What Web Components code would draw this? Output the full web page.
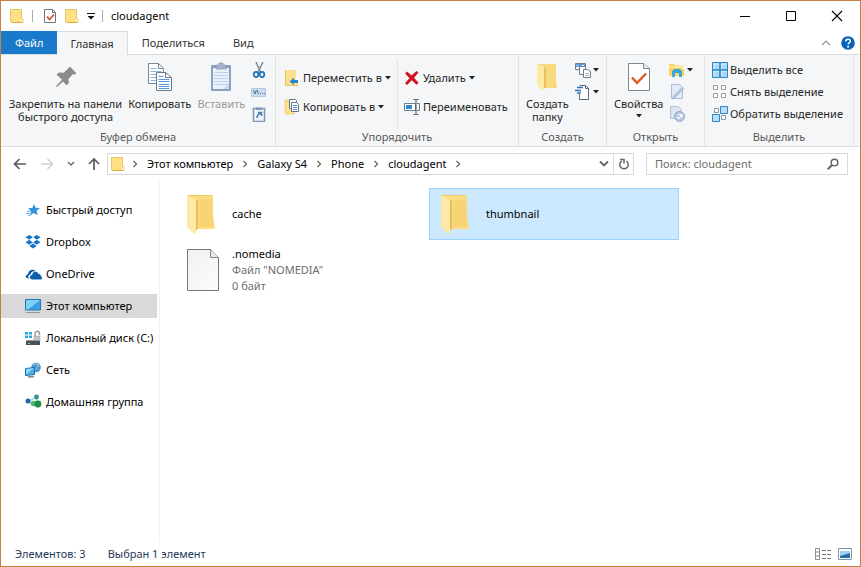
<!DOCTYPE html>
<html lang="ru">
<head>
<meta charset="utf-8">
<title>cloudagent</title>
<style>
html, body { height: 100%; margin: 0; }
body { font: 11px/16px "Noto Sans", "Open Sans", sans-serif; color: #111; background: #fff; }
</style>
</head>
<body>
<explorer-window>
  <title-bar slot="title" heading="cloudagent"></title-bar>
  <tab-strip slot="tabs"></tab-strip>

  <ribbon-bar slot="ribbon">
    <ribbon-group label="Буфер обмена" style="--w:275px;--p:8px">
      <ribbon-big icon="pin">Закрепить на панели<br>быстрого доступа</ribbon-big>
      <ribbon-big icon="copy">Копировать</ribbon-big>
      <ribbon-big icon="paste" off>Вставить</ribbon-big>
      <ribbon-stack>
        <ribbon-small icon="cut" name="Вырезать"></ribbon-small>
        <ribbon-small icon="path" name="Скопировать путь"></ribbon-small>
        <ribbon-small icon="shortcut" name="Вставить ярлык"></ribbon-small>
      </ribbon-stack>
    </ribbon-group>
    <ribbon-group label="Упорядочить" style="--w:243px;--p:8px">
      <ribbon-stack wide>
        <ribbon-small icon="moveto" menu>Переместить в</ribbon-small>
        <ribbon-small icon="copyto" menu>Копировать в</ribbon-small>
      </ribbon-stack>
      <ribbon-stack wide ruled>
        <ribbon-small icon="delete" menu>Удалить</ribbon-small>
        <ribbon-small icon="rename">Переименовать</ribbon-small>
      </ribbon-stack>
    </ribbon-group>
    <ribbon-group label="Создать" style="--w:88px">
      <ribbon-big icon="folderbig">Создать<br>папку</ribbon-big>
      <ribbon-stack>
        <ribbon-small icon="newitem" name="Создать элемент" menu></ribbon-small>
        <ribbon-small icon="easy" name="Простой доступ" menu></ribbon-small>
      </ribbon-stack>
    </ribbon-group>
    <ribbon-group label="Открыть" style="--w:98px">
      <ribbon-big icon="props" menu>Свойства</ribbon-big>
      <ribbon-stack>
        <ribbon-small icon="open" name="Открыть" menu></ribbon-small>
        <ribbon-small icon="edit" name="Изменить"></ribbon-small>
        <ribbon-small icon="history" name="Журнал"></ribbon-small>
      </ribbon-stack>
    </ribbon-group>
    <ribbon-group label="Выделить" style="--w:149px">
      <ribbon-stack>
        <ribbon-small icon="selall">Выделить все</ribbon-small>
        <ribbon-small icon="selnone">Снять выделение</ribbon-small>
        <ribbon-small icon="selinv">Обратить выделение</ribbon-small>
      </ribbon-stack>
    </ribbon-group>
  </ribbon-bar>

  <address-bar slot="address" path="Этот компьютер/Galaxy S4/Phone/cloudagent"></address-bar>

  <nav-pane slot="nav">
    <nav-item icon="star">Быстрый доступ</nav-item>
    <nav-item icon="dropbox">Dropbox</nav-item>
    <nav-item icon="cloud">OneDrive</nav-item>
    <nav-item icon="pc" current>Этот компьютер</nav-item>
    <nav-item icon="disk">Локальный диск (C:)</nav-item>
    <nav-item icon="net">Сеть</nav-item>
    <nav-item icon="home">Домашняя группа</nav-item>
  </nav-pane>

  <file-grid slot="files">
    <file-tile icon="folder">cache</file-tile>
    <file-tile icon="folder" selected>thumbnail</file-tile>
    <file-tile icon="file">.nomedia<span slot="meta">Файл "NOMEDIA"</span><span slot="meta">0 байт</span></file-tile>
  </file-grid>

  <status-bar slot="status">
    <span>Элементов: 3</span>
    <span>Выбран 1 элемент</span>
  </status-bar>
</explorer-window>

<script>
const MINI_FOLDER = '<path d="M1 1h10l1 1v11l2 1v1H3l-2-1z" fill="#ffe084"/><path d="M11 1.500h1.500v9.500H14v3.500H3l-1.500-1V1.500z" fill="none" stroke="#e8c565"/><path d="M3 14.500h10" stroke="#d9ab3c"/>';
const ICONS = {
  minifolder: [16, 16, MINI_FOLDER],
  minicheck: [14, 16, '<path d="M1.500 1.500h8l3 3v10h-11z" fill="#fff" stroke="#6f7780"/><path d="M9.500 1.500v3h3" fill="none" stroke="#6f7780"/><path d="M4 8.500l2.500 3 4.500-5" fill="none" stroke="#d4502a" stroke-width="1.800"/>'],
  qat: [8, 8, '<path d="M0 1.500h8" stroke="#111"/><path d="M0.500 4h7L4 7.500z" fill="#111"/>'],
  min: [12, 12, '<path d="M1 6.500h10" stroke="#000"/>'],
  max: [12, 12, '<path d="M1.500 1.500h9v9h-9z" fill="none" stroke="#000"/>'],
  close: [12, 12, '<path d="M1 1l10 10M11 1L1 11" stroke="#000" stroke-width="1.100"/>'],
  collapse: [10, 6, '<path d="M1 5l4-4 4 4" fill="none" stroke="#999" stroke-width="1.200"/>'],
  help: [14, 14, '<circle cx="7" cy="7" r="6.800" fill="#0a62b8"/><path d="M4.800 5.400c0-3 4.500-2.800 4.500-.3 0 1.700-2.200 1.600-2.200 3.500" fill="none" stroke="#fff" stroke-width="1.500"/><circle cx="7.100" cy="10.800" r="1" fill="#fff"/>'],
  arrow: [6, 4, '<path d="M0 0h6L3 3.500z" fill="#222"/>'],
  pin: [32, 32, '<path d="M20.500 6l6 6.500-2 1.200-1.500-.6-4.500 5 .3 4.200-2.400 2L13 20.500 7.500 25.500 6 26l.8-1.800L12 18.800 6.500 13.500l2.500-2 4.600.2 4.700-4.200-.2-.8z" fill="#8b8b8b"/>'],
  copy: [32, 32, '<path d="M4.500 2.500h10l5 5v15h-15z" fill="#fff" stroke="#7b8794"/><path d="M14.500 2.500v5h5" fill="none" stroke="#7b8794"/><path d="M6.500 7.500h6M6.500 10.500h11M6.500 13.500h11M6.500 16.500h11M6.500 19.500h11" stroke="#8ab6e6"/><path d="M12.500 11.500h9l6 5v13h-15z" fill="#fff" stroke="#6b7885"/><path d="M21.500 11.500v5h6" fill="none" stroke="#6b7885"/><path d="M14.500 15.500h5M14.500 18.500h11M14.500 20.500h11M14.500 23.500h11M14.500 25.500h11M14.500 27.500h11" stroke="#5c9ae0"/>'],
  paste: [32, 32, '<rect x="6" y="4" width="20" height="26" rx="1" fill="#8b9fbe"/><path d="M8 7h16v21H8z" fill="#eaf1fb"/><path d="M9 11.500h14M9 14.500h14M9 17.500h14M9 20.500h14M9 23.500h14" stroke="#bcd2ee"/><path d="M18 28l6-6v6z" fill="#c8d6e8"/><path d="M11 4h3V2h4v2h3v4H11z" fill="#a7b5cc" stroke="#7d8fae" stroke-width=".600"/>'],
  cut: [16, 16, '<path d="M5 0l4.500 10M12 0L7 10" stroke="#7c8b99" stroke-width="1.500"/><ellipse cx="5" cy="12.500" rx="2.300" ry="2.600" fill="none" stroke="#1f73b8" stroke-width="1.700"/><ellipse cx="11" cy="12.500" rx="2.300" ry="2.600" fill="none" stroke="#1f73b8" stroke-width="1.700"/>'],
  path: [16, 16, '<path d="M.5 4.500h14v8H.5z" fill="#c9dcf1" stroke="#b4c9e2"/><path d="M2.500 6l1.500 4 1.500-4M6 6l1.500 4M9 9.500h1M11 9.500h1M13 9.500h1" fill="none" stroke="#566f92"/>'],
  shortcut: [16, 16, '<path d="M2.500 2.500h11v13h-11z" fill="#f1f5fb" stroke="#8197b8" stroke-width="1.600"/><path d="M5 1.500h6V4H5z" fill="#8197b8"/><path d="M6 12c0-3 1-4 4-5M7 6.500h3.500V10" fill="none" stroke="#5079b5" stroke-width="1.600"/>'],
  moveto: [16, 16, '<path d="M1 0h11v11l2 1v4H2l-1-1z" fill="#ffe08a"/><path d="M1.500 0v15.500H14" fill="none" stroke="#e8c468"/><path d="M14 10h-4V7.500L5.500 11.500 10 15v-2h4z" fill="#2f83c8"/>'],
  copyto: [16, 16, '<path d="M1 1h9v14H2l-1-1z" fill="#ffe08a" stroke="#e8c468" stroke-width=".700"/><path d="M5.500.5h6l1 1v8h-7z" fill="#fff" stroke="#63748a"/><path d="M7.500 3.500h5l2 2v7h-7z" fill="#fff" stroke="#63748a"/><path d="M9 6.500h4M9 8.500h4M9 10.500h4" stroke="#4b8ad2"/>'],
  delete: [16, 16, '<path d="M3 1.500l4.500 4L12.500 1l2 1.500L10 7.800l4.500 5-2 2L7.800 10.200 3 15l-2-1.800 4.500-5L1.200 3.500z" fill="#d5101d"/>'],
  rename: [16, 16, '<path d="M.5 4.500h11v7H.5z" fill="#fff" stroke="#6c8093"/><path d="M2 6h6v4H2z" fill="#3586cf"/><path d="M13 4.500h2.500v7H13" fill="none" stroke="#6c8093"/><path d="M9.500.5h2l.500.500.500-.500h2M12 1v14M9.500 15.500h2l.500-.500.500.500h2" fill="none" stroke="#44515f"/>'],
  folderbig: [32, 32, '<path d="M6 3h19v17l1 7H13z" fill="#f8d97e"/><path d="M6 3l8 3v18l-2 6-5-5-1-3z" fill="#ffeaa6"/><path d="M13 6l2 1v18l-2 3z" fill="#e8bf63"/>'],
  newitem: [16, 16, '<path d="M.5 1.500h10v6H.5z" fill="#fff" stroke="#6d7c8c"/><path d="M1 2h9v3H1z" fill="#5f9fd9"/><path d="M2 3.500h1M7 3.500h2" stroke="#fff"/><path d="M4.500 4.500h6v8h-6z" fill="#fff" stroke="#6d7c8c"/><path d="M8.500 7.500h4l3 2v6h-7z" fill="#fff" stroke="#6d7c8c"/><path d="M10 11.500h4M10 13.500h4" stroke="#aab6c2"/>'],
  easy: [16, 16, '<path d="M4.500 1.500h6l3 3v11h-9V10" fill="#fff" stroke="#5f6a75"/><path d="M10.500 1.500v3h3" fill="none" stroke="#5f6a75"/><path d="M2 3.500h6M0 6.500h6M2 9h4" stroke="#2c6fb8" stroke-width="1.400"/>'],
  props: [32, 32, '<path d="M5.500 2.500h15l6 5v22h-21z" fill="#fff" stroke="#7b8794"/><path d="M20.500 2.500v5h6" fill="#eee" stroke="#7b8794"/><path d="M9 16.500l5 5.500 9-9.500" fill="none" stroke="#dc5a24" stroke-width="2.500"/>'],
  open: [16, 16, '<path d="M0 2h5l1 1.500h7V7h2v7H0z" fill="#fbd35e"/><path d="M0 4h14v2H0z" fill="#ffe794"/><path d="M3 15V9.500L5 7h6l2 2.500V15h-3v-4H6v4z" fill="#3ba5df"/>'],
  edit: [16, 16, '<path d="M2.500.5h8l3 3v11h-11z" fill="#e3ebf6" stroke="#a9bcd8"/><path d="M13.500 3l1.500 1.500L6 13.500l-2.500 1 1-2.500z" fill="#b4c6e0" stroke="#92abcf" stroke-width=".600"/>'],
  history: [16, 16, '<path d="M1.500.5h8l3 3v9h-11z" fill="#dde5f1" stroke="#b3c1d6"/><circle cx="10.500" cy="10.500" r="5" fill="#b7c6dd" stroke="#8fa5c4"/><path d="M7.500 11l2.500 1.500 3-4M9 8.500h4v3" fill="none" stroke="#fff" stroke-width="1.200"/>'],
  selall: [16, 16, '<path d="M.5.5h15v15H.5z" fill="#a9d8f8" stroke="#2c87c9"/><path d="M8 1v14M1 8h14" stroke="#2c87c9" stroke-width="1.600"/><path d="M2 7V2H7M9.500 7V2H14M2 14V9.500H7M9.500 14V9.500H14" fill="none" stroke="#d4edff"/>'],
  selnone: [16, 16, '<path d="M1.500 1.500h4v4h-4zM9.500 1.500h4v4h-4zM1.500 9.500h4v4h-4zM9.500 9.500h4v4h-4z" fill="#fff" stroke="#9a9a9a"/>'],
  selinv: [16, 16, '<path d="M8.500.5h7v7h-7zM.5 8.500h7v7h-7z" fill="#b5defa" stroke="#2c87c9"/><path d="M2.500 2.500h4v4h-4zM9.500 9.500h4v4h-4z" fill="#fff" stroke="#8299ad"/>'],
  back: [14, 12, '<path d="M13 6H2M6.500 1L1.500 6l5 5" fill="none" stroke="#5c5c5c" stroke-width="1.700"/>'],
  fwd: [14, 12, '<path d="M1 6h11M7.500 1l5 5-5 5" fill="none" stroke="#cfcfcf" stroke-width="1.500"/>'],
  up: [12, 14, '<path d="M6 13V2M1 7l5-5 5 5" fill="none" stroke="#5c5c5c" stroke-width="1.700"/>'],
  down: [8, 6, '<path d="M1 1l3 3 3-3" fill="none" stroke="#6c6c6c" stroke-width="1.500"/>'],
  downbig: [10, 8, '<path d="M1 1.500l4 4 4-4" fill="none" stroke="#666" stroke-width="1.800"/>'],
  chev: [6, 8, '<path d="M1.500 1l3 3-3 3" fill="none" stroke="#666" stroke-width="1.300"/>'],
  refresh: [12, 14, '<path d="M8.500 4.200A4.200 4.200 0 1 1 3.800 4" fill="none" stroke="#666" stroke-width="1.500"/><path d="M2 2.500h4v4" fill="none" stroke="#666" stroke-width="1.500"/>'],
  search: [12, 12, '<circle cx="7.500" cy="4.500" r="3.300" fill="none" stroke="#666" stroke-width="1.500"/><path d="M5 7l-4.300 4.300" stroke="#666" stroke-width="2"/>'],
  star: [16, 16, '<path d="M9 2l1.600 3.800 4.400.2-3.400 2.800 1 4.400-3.900-2.200L5 13.500l1.200-4.200L3 6.400l4.500-.6z" fill="#2f93dc"/><path d="M2 9.500h3.500M1 11.500h4M3 13.500h2" stroke="#5fb0e8"/>'],
  dropbox: [16, 16, '<path d="M4.300 1L8 3.300 4.300 5.800.5 3.300zM11.700 1l3.800 2.300-3.800 2.500L8 3.300zM4.300 5.800L8 8.300l-3.700 2.400L.5 8.300zM11.700 5.800l3.800 2.500-3.800 2.400L8 8.300zM4.300 12L8 9.500l3.700 2.500L8 14.500z" fill="#1673c8"/><path d="M4.300 5.800L8 3.300l3.700 2.500L8 8.300z" fill="#fff"/>'],
  cloud: [18, 16, '<path d="M3 12.500C-.5 12 .2 8.200 3 8.200 3 4 8.500 2 11 5.600c-3-.9-5 .6-5.300 2.600-2.500.5-2.900 2.900-1.700 4.300z" fill="#0d5fae"/><path d="M7.500 13.500c-3.700-.3-3.200-4.500-.3-4.600.1-3.900 5.500-4.200 6.300-1 2-.1 2.500 1.500 2.300 2.300 1.900.5 1.600 3.200-.3 3.300z" fill="#0d5fae"/>'],
  pc: [18, 16, '<path d="M.5 1.500h15v10.500h-15z" fill="#3aa0e0" stroke="#2876b0"/><path d="M1 2h14L3 11.500H1z" fill="#7fd0f6"/><path d="M1 14.500h14" stroke="#8c9aa5"/>'],
  disk: [16, 16, '<path d="M0 2h3v2.500H0zM4 2h3v2.500H4zM0 5.500h3V8H0zM4 5.500h3V8H4z" fill="#2aa8d8"/><path d="M10 6V3.500a2.200 2.200 0 0 1 4.500 0V5" fill="none" stroke="#9a9a9a" stroke-width="1.400"/><path d="M9 6h6v5H9z" fill="#c4c4c4" stroke="#999" stroke-width=".500"/><path d="M1 11h14v4H1z" fill="#4a5057"/><path d="M2 10h12l1 1H1z" fill="#999"/><path d="M3 13.500h2" stroke="#6fe07a"/>'],
  net: [16, 16, '<circle cx="11" cy="5.500" r="4.800" fill="#4f95c9"/><path d="M8 3c2-2 5-1 6 1M9 8c2 0 4-2 4-6" fill="none" stroke="#a4d0ee"/><path d="M.5 6.500l9-1v7l-9 1z" fill="#49b0ec" stroke="#1d6ea8"/><path d="M1 7l8-1-7 6H1z" fill="#8dd6f9"/><path d="M3 15l6-.5" stroke="#6f8290" stroke-width="1.300"/>'],
  home: [17, 16, '<path d="M3 7.500l9-4.500v10z" fill="none" stroke="#9ccfc0" stroke-width="1.200"/><circle cx="3" cy="7" r="2.500" fill="#2367a8"/><circle cx="11.500" cy="3" r="2.400" fill="#2a8f9a"/><circle cx="8.500" cy="9.500" r="2.800" fill="#4dbb6c"/><circle cx="13" cy="10" r="3.400" fill="#268a4b"/>'],
  folder: [32, 44, '<path d="M1 3h25v20l2 14H9z" fill="#fbdc80"/><path d="M12 8l13-1 1 28H12z" fill="#f6d16c" opacity=".7"/><path d="M0 3l9 5v33l-2 1-5-5-2-2z" fill="#ffe9a6"/><path d="M1 3.500h24" stroke="#f2c868"/><path d="M9 8l2 1v27l-2 3z" fill="#e6bb5d"/>'],
  file: [32, 44, '<defs><linearGradient id="g" x1="0" y1="0" x2="1" y2="1"><stop offset="0" stop-color="#f1f1f1"/><stop offset="1" stop-color="#fcfcfc"/></linearGradient></defs><path d="M.5 1.500h23l8 8v33H.5z" fill="url(#g)" stroke="#777"/><path d="M23.500 1.500v8h8" fill="#e8e8e8" stroke="#888"/>'],
  details: [16, 12, '<path d="M.5 .5h4v11h-4zM.5 4h4M.5 8h4" fill="none" stroke="#8c8c8c"/><path d="M7 2.500h4M12 2.500h4M7 6.500h4M12 6.500h4M7 10.500h4M12 10.500h4" stroke="#777"/>'],
  tiles: [14, 12, '<path d="M.5.5h13v11H.5z" fill="#fff" stroke="#7d94b0"/><path d="M2 3h10v7H2z" fill="#2d6ca2"/><path d="M2 3h10v2L2 8z" fill="#9cd3f0"/>']
};

class UiIcon extends HTMLElement {
  static observedAttributes = ['name'];
  constructor() {
    super();
    this.attachShadow({ mode: 'open' });
  }
  attributeChangedCallback() {
    const [w, h, body] = ICONS[this.getAttribute('name')];
    this.shadowRoot.innerHTML = `<style>:host{display:inline-flex;flex:none}svg{display:block}</style>
      <svg aria-hidden="true" width="${w}" height="${h}" viewBox="0 0 ${w} ${h}">${body}</svg>`;
  }
}
customElements.define('ui-icon', UiIcon);

function define(name, css, html, setup) {
  const tpl = document.createElement('template');
  tpl.innerHTML = '<style>*{box-sizing:border-box}button{font:inherit;color:inherit;background:none;border:0;padding:0;margin:0}' + css + '</style>' + html;
  customElements.define(name, class extends HTMLElement {
    connectedCallback() {
      if (this.shadowRoot) return;
      const root = this.attachShadow({ mode: 'open' });
      root.append(tpl.content.cloneNode(true));
      if (setup) setup(this, root);
    }
  });
}
const attr = (el, n) => el.getAttribute(n) || '';

define('explorer-window', `
  :host{display:flex;flex-direction:column;box-sizing:border-box;min-height:100vh;border:1px solid #c9803f;background:#fff}
  main{flex:1;display:grid;grid-template-columns:156px 1fr;gap:2px}
  .nav{min-width:0}.files{border-left:1px solid #f2f2f2;min-width:0}`,
  `<slot name="title"></slot><slot name="tabs"></slot><slot name="ribbon"></slot><slot name="address"></slot>
  <main><div class="nav"><slot name="nav"></slot></div><div class="files"><slot name="files"></slot></div></main>
  <slot name="status"></slot>`);

define('title-bar', `
  :host{display:flex;align-items:center;height:30px;padding-left:8px}
  button{display:flex;align-items:center;justify-content:center}
  i{width:1px;height:12px;background:#aaa}
  .quick{display:flex;align-items:center;gap:7px}
  .props{padding-left:3px}
  h1{flex:1;margin:0 0 0 8px;font:inherit;color:#000}
  .ctl{width:46px;height:30px}`,
  `<div class="quick"><ui-icon name="minifolder"></ui-icon><i></i>
  <button class="props" aria-label="Свойства"><ui-icon name="minicheck"></ui-icon></button>
  <button aria-label="Новая папка"><ui-icon name="minifolder"></ui-icon></button>
  <button aria-label="Настройка панели"><ui-icon name="qat"></ui-icon></button><i></i></div>
  <h1></h1>
  <button class="ctl" aria-label="Свернуть"><ui-icon name="min"></ui-icon></button>
  <button class="ctl" aria-label="Развернуть"><ui-icon name="max"></ui-icon></button>
  <button class="ctl" aria-label="Закрыть"><ui-icon name="close"></ui-icon></button>`,
  (el, root) => { root.querySelector('h1').textContent = attr(el, 'heading'); });

define('tab-strip', `
  :host{display:flex;height:24px;border-bottom:1px solid #dadbdc;box-sizing:border-box}
  button{padding:0 14px;color:#333}
  .file{background:#1979ca;color:#fff}
  .on{background:#f5f6f7;border:1px solid #dadbdc;border-bottom:0;border-left:0;margin-bottom:-1px;padding:0 13px}
  span{flex:1}.side{display:flex;align-items:center;padding:0 5px}`,
  `<button class="file">Файл</button><button class="on">Главная</button><button>Поделиться</button><button>Вид</button><span></span>
  <button class="side" aria-label="Свернуть ленту"><ui-icon name="collapse"></ui-icon></button>
  <button class="side" aria-label="Справка"><ui-icon name="help"></ui-icon></button>`);

define('ribbon-bar', ':host{display:flex;min-height:91px;background:#f5f6f7;border-bottom:1px solid #dadbdc;color:#262626}', '<slot></slot>');

define('ribbon-group', `
  :host{display:flex;flex-direction:column;box-sizing:border-box;min-width:var(--w);flex:none;padding:4px 0 1px;border-right:1px solid #e2e3e4}
  .body{flex:1;display:flex;gap:6px;padding-left:var(--p,7px)}
  .label{text-align:center;color:#5a5a5a}`,
  '<div class="body"><slot></slot></div><div class="label"></div>',
  (el, root) => { root.querySelector('.label').textContent = attr(el, 'label'); });

define('ribbon-big', `
  :host{display:block}:host([off]){color:#9b9b9b}
  button{display:flex;flex-direction:column;align-items:center;line-height:13px;padding-top:2px}
  span{padding-top:4px}.m{margin-top:4px}`,
  '<button><ui-icon></ui-icon><span><slot></slot></span></button>',
  (el, root) => {
    root.querySelector('ui-icon').setAttribute('name', attr(el, 'icon'));
    if (el.hasAttribute('menu')) root.querySelector('button').insertAdjacentHTML('beforeend', '<ui-icon class="m" name="arrow"></ui-icon>');
  });

define('ribbon-stack', `
  :host{display:flex;flex-direction:column;gap:6px;padding-top:3px}
  :host([wide]){gap:13px;padding-top:11px}
  :host([ruled]){border-left:1px solid #e2e3e4;padding-left:6px}`, '<slot></slot>');

define('ribbon-small', `
  :host{display:block}
  button{display:flex;align-items:center;gap:2px;height:16px;white-space:nowrap}
  .text{gap:3px}.text ui-icon + ui-icon{margin-left:2px}`,
  '<button><ui-icon></ui-icon><slot></slot></button>',
  (el, root) => {
    const b = root.querySelector('button');
    root.querySelector('ui-icon').setAttribute('name', attr(el, 'icon'));
    if (attr(el, 'name')) b.setAttribute('aria-label', attr(el, 'name'));
    else if (el.closest('[wide]')) b.className = 'text';
    if (el.hasAttribute('menu')) b.insertAdjacentHTML('beforeend', '<ui-icon name="arrow"></ui-icon>');
  });

define('address-bar', `
  :host{display:flex;align-items:center;padding:6px 12px 5px}
  button{display:flex;align-items:center;justify-content:center}
  .moves{display:flex;align-items:center;gap:13px;padding-right:7px}
  .box{display:flex;align-items:center;height:22px;border:1px solid #d9d9d9}
  nav{flex:1;padding-left:2px}nav a{color:#000;text-decoration:none}
  nav ui-icon[name=chev]{padding:0 9px}
  nav ui-icon[name=minifolder] + ui-icon{padding-left:6px}
  .gap{flex:1}.list{padding:0 4px}
  .re{width:20px;height:20px;border-left:1px solid #d9d9d9}
  .find{width:202px;margin-left:12px;padding:0 8px}
  input{flex:1;min-width:0;border:0;padding:0;outline:0;background:none;font:inherit;color:#000}
  input::placeholder{color:#6d6d6d;opacity:1}`,
  `<div class="moves"><button aria-label="Назад"><ui-icon name="back"></ui-icon></button>
  <button aria-label="Вперёд"><ui-icon name="fwd"></ui-icon></button>
  <button aria-label="Последние"><ui-icon name="down"></ui-icon></button>
  <button aria-label="Вверх"><ui-icon name="up"></ui-icon></button></div>
  <nav class="box"><ui-icon name="minifolder"></ui-icon><ui-icon name="chev"></ui-icon><span class="gap"></span>
  <button class="list" aria-label="Список"><ui-icon name="downbig"></ui-icon></button>
  <button class="re" aria-label="Обновить"><ui-icon name="refresh"></ui-icon></button></nav>
  <label class="box find"><input type="search" aria-label="Поиск" placeholder="Поиск: cloudagent"><ui-icon name="search"></ui-icon></label>`,
  (el, root) => {
    const gap = root.querySelector('.gap');
    for (const part of attr(el, 'path').split('/')) {
      const a = document.createElement('a');
      a.href = '#';
      a.textContent = part;
      const c = document.createElement('ui-icon');
      c.setAttribute('name', 'chev');
      gap.before(a, c);
    }
  });

define('nav-pane', ':host{display:flex;flex-direction:column;gap:8px;padding-top:18px}', '<slot></slot>');
define('nav-item', `
  :host{display:block}:host([current]){background:#d9d9d9}
  a{display:flex;align-items:center;height:24px;padding-left:24px;color:#000;text-decoration:none;white-space:nowrap;overflow:hidden}
  ui-icon{width:21px}`,
  '<a href="#"><ui-icon></ui-icon><slot></slot></a>',
  (el, root) => { root.querySelector('ui-icon').setAttribute('name', attr(el, 'icon')); });

define('file-grid', ':host{display:grid;grid-template-columns:repeat(auto-fill,250px);gap:4px;padding:8px 15px}', '<slot></slot>');
define('file-tile', `
  :host{display:flex;align-items:center;gap:13px;box-sizing:border-box;min-height:52px;padding:0 11px;border:1px solid transparent;color:#000}
  :host([selected]){background:#cce8ff;border-color:#99d1ff}
  .meta{display:flex;flex-direction:column;color:#6d6d6d}`,
  '<ui-icon></ui-icon><div><slot></slot><div class="meta"><slot name="meta"></slot></div></div>',
  (el, root) => { root.querySelector('ui-icon').setAttribute('name', attr(el, 'icon')); });

define('status-bar', `
  :host{display:flex;align-items:center;gap:22px;height:24px;padding:0 8px 0 14px;color:#1e395b}
  .views{margin-left:auto;display:flex;gap:7px}button{display:flex}`,
  `<slot></slot><div class="views"><button aria-label="Таблица"><ui-icon name="details"></ui-icon></button>
  <button aria-label="Крупные значки"><ui-icon name="tiles"></ui-icon></button></div>`);
</script>
</body>
</html>
